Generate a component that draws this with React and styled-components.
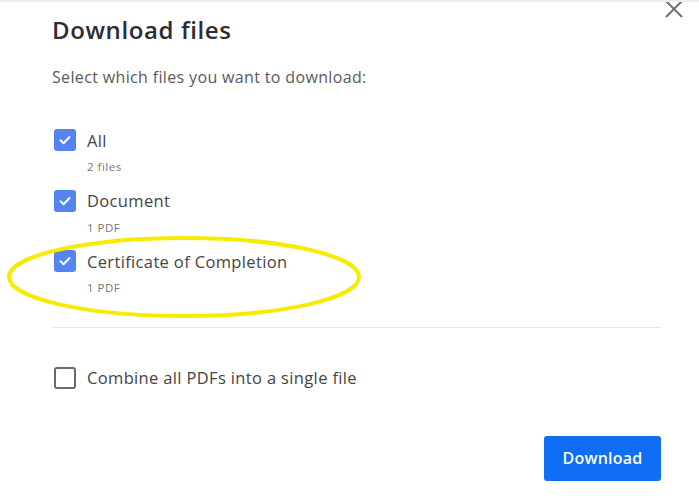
import styled, { createGlobalStyle } from 'styled-components';

const GlobalStyle = createGlobalStyle`
  body {
    margin: 0;
    background: #ffffff;
    font-family: 'Open Sans', 'Noto Sans', sans-serif;
  }
`;

const Dialog = styled.div`
  position: relative;
  width: 699px;
  height: 500px;
  box-sizing: border-box;
  border-top: 2px solid #ececec;
  padding: 0 38px 0 52px;
  display: flex;
  flex-direction: column;
  overflow: hidden;
`;

const Close = styled.button`
  position: absolute;
  top: -5px;
  right: 13px;
  width: 24px;
  height: 24px;
  padding: 0;
  border: none;
  background: none;
  display: flex;
  align-items: center;
  justify-content: center;
`;

const Title = styled.h2`
  margin: 13px 0 0;
  font-size: 24px;
  line-height: 30px;
  font-weight: 600;
  letter-spacing: 0.6px;
  color: #2c2c34;
`;

const Subtitle = styled.p`
  margin: 22px 0 0;
  font-size: 16px;
  line-height: 20px;
  letter-spacing: 0.35px;
  color: #5a5a5a;
`;

const FileList = styled.div`
  display: flex;
  flex-direction: column;
  margin-top: 42px;
`;

const Item = styled.div`
  display: flex;
  flex-direction: column;
  height: 60.5px;
`;

const Row = styled.label`
  display: flex;
  align-items: center;
  gap: 11px;
  height: 22px;
  padding-left: 2px;
  font-size: 16.5px;
  letter-spacing: 0.35px;
  color: #444444;
`;

const Box = styled.span`
  width: 22px;
  height: 22px;
  box-sizing: border-box;
  border-radius: 3px;
  flex-shrink: 0;
  display: flex;
  align-items: center;
  justify-content: center;
  background: ${p => (p.$checked ? '#5384f2' : '#ffffff')};
  border: ${p => (p.$checked ? 'none' : '2px solid #6a6a6a')};
`;

const Meta = styled.span`
  margin: 9px 0 0 35px;
  font-size: 11.5px;
  line-height: 14px;
  letter-spacing: 0.5px;
  color: #777777;
`;

const Divider = styled.hr`
  margin: 16px 0 0;
  border: none;
  border-top: 1px solid #e6e6e6;
`;

const Combine = styled(Row)`
  margin-top: 39px;
`;

const Footer = styled.div`
  display: flex;
  justify-content: flex-end;
  margin-top: 47px;
`;

const Button = styled.button`
  width: 117px;
  height: 45px;
  border: none;
  border-radius: 3px;
  background: #106df5;
  color: #ffffff;
  font-family: 'Open Sans', 'Noto Sans', sans-serif;
  font-size: 16px;
  font-weight: 600;
  letter-spacing: 0.2px;
`;

const Highlight = styled.svg`
  position: absolute;
  left: 5px;
  top: 232px;
  pointer-events: none;
`;

const Check = () => (
  <svg width="14" height="14" viewBox="0 0 14 14">
    <path d="M2.5 7.2 L5.6 10.2 L11.5 4" fill="none" stroke="#fff" strokeWidth="2" strokeLinecap="round" strokeLinejoin="round" />
  </svg>
);

const files = [
  { label: 'All', meta: '2 files' },
  { label: 'Document', meta: '1 PDF' },
  { label: 'Certificate of Completion', meta: '1 PDF' },
];

export default function App() {
  return (
    <>
      <GlobalStyle />
      <Dialog>
        <Close aria-label="Close">
          <svg width="20" height="20" viewBox="0 0 20 20">
            <path d="M2 2 L18 18 M18 2 L2 18" stroke="#6f6f6f" strokeWidth="2" />
          </svg>
        </Close>
        <Title>Download files</Title>
        <Subtitle>Select which files you want to download:</Subtitle>
        <FileList>
          {files.map(f => (
            <Item key={f.label}>
              <Row>
                <Box $checked><Check /></Box>
                {f.label}
              </Row>
              <Meta>{f.meta}</Meta>
            </Item>
          ))}
        </FileList>
        <Divider />
        <Combine>
          <Box />
          Combine all PDFs into a single file
        </Combine>
        <Footer>
          <Button>Download</Button>
        </Footer>
        <Highlight width="360" height="88" viewBox="0 0 360 88">
          <ellipse cx="179" cy="43" rx="175" ry="39" fill="none" stroke="#f7ec00" strokeWidth="4" />
        </Highlight>
      </Dialog>
    </>
  );
}
